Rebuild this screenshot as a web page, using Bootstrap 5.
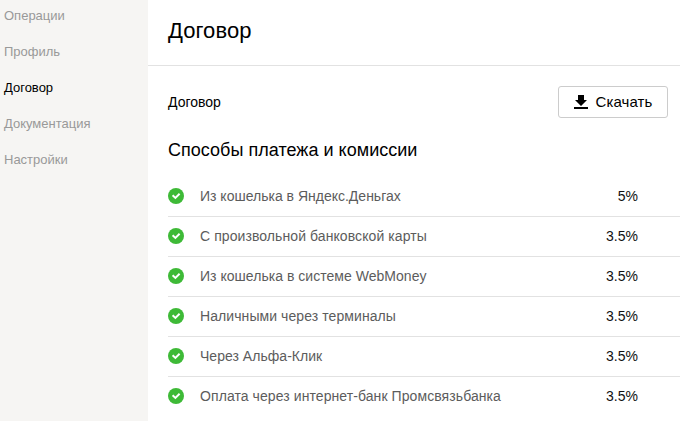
<!DOCTYPE html>
<html lang="ru">
<head>
<meta charset="utf-8">
<title>Договор</title>
<link href="https://cdn.jsdelivr.net/npm/bootstrap@5.3.0/dist/css/bootstrap.min.css" rel="stylesheet">
<style>
body{font-family:"Liberation Sans",Arial,sans-serif;color:#000;height:421px;overflow:hidden;background:#fff}
.side{width:148px;background:#f6f5f3}
.side .nav-link{height:36px;line-height:36px;padding:0 0 0 4px;font-size:13px;color:#999}
.side .nav-link.active{color:#000}
.side .nav{margin-top:-2px}
.page-head{height:66px;border-bottom:1px solid #e2e2e2;padding:17px 0 0 20px}
.page-head h1{font-size:22px;line-height:28px;margin:0;font-weight:400;letter-spacing:.06px}
.doc-row{height:32px;margin:20px 12px 0 20px;font-size:14px}
.dl{width:110px;height:32px;border:1px solid #ccc;border-radius:3px;font-size:15px;padding:0;color:#000}
.dl span{letter-spacing:.08px}
h2.sub{font-size:18px;line-height:24px;margin:20px 0 15px 20px;font-weight:400;letter-spacing:.03px}
.fees{margin-left:20px}
.fees li{height:40px;padding-bottom:1px;border-bottom:1px solid #e2e2e2;font-size:14px;line-height:22px;color:#5c5c5c}
.fees li:last-child{border-bottom-color:transparent}
.fees svg{margin-right:16px}
.fee{margin-right:42px;color:#111}
.wide{letter-spacing:.08px}
.semi{letter-spacing:.03px}
</style>
<script src="https://cdn.jsdelivr.net/npm/bootstrap@5.3.0/dist/js/bootstrap.bundle.min.js"></script>
</head>
<body class="d-flex">
<svg class="d-none"><symbol id="ok" viewBox="0 0 16 16"><circle cx="8" cy="8" r="8" fill="#3eba37"/><path d="M4.6 7.2 7.4 9.9 11.6 5.8" fill="none" stroke="#fff" stroke-width="2"/></symbol></svg>
<aside class="side flex-shrink-0"><nav class="nav flex-column">
<a class="nav-link" href="#">Операции</a><a class="nav-link" href="#">Профиль</a><a class="nav-link active" href="#">Договор</a><a class="nav-link" href="#">Документация</a><a class="nav-link" href="#">Настройки</a>
</nav></aside>
<main class="flex-grow-1">
<header class="page-head"><h1>Договор</h1></header>
<div class="doc-row d-flex justify-content-between align-items-center"><span>Договор</span>
<button class="btn dl d-flex align-items-center justify-content-center gap-2"><svg width="14" height="14"><path d="M4 0h6v5h3L7 11 1 5h3zM0 12h14v2H0z"/></svg><span>Скачать</span></button></div>
<h2 class="sub">Способы платежа и комиссии</h2>
<ul class="fees list-unstyled mb-0">
<li class="d-flex align-items-center"><svg width="16" height="16"><use href="#ok"/></svg><span>Из кошелька в Яндекс.Деньгах</span><span class="fee ms-auto">5%</span></li>
<li class="d-flex align-items-center"><svg width="16" height="16"><use href="#ok"/></svg><span class="wide">С произвольной банковской карты</span><span class="fee ms-auto">3.5%</span></li>
<li class="d-flex align-items-center"><svg width="16" height="16"><use href="#ok"/></svg><span class="semi">Из кошелька в системе WebMoney</span><span class="fee ms-auto">3.5%</span></li>
<li class="d-flex align-items-center"><svg width="16" height="16"><use href="#ok"/></svg><span class="wide">Наличными через терминалы</span><span class="fee ms-auto">3.5%</span></li>
<li class="d-flex align-items-center"><svg width="16" height="16"><use href="#ok"/></svg><span class="semi">Через Альфа-Клик</span><span class="fee ms-auto">3.5%</span></li>
<li class="d-flex align-items-center"><svg width="16" height="16"><use href="#ok"/></svg><span class="wide">Оплата через интернет-банк Промсвязьбанка</span><span class="fee ms-auto">3.5%</span></li>
</ul>
</main>
</body>
</html>
